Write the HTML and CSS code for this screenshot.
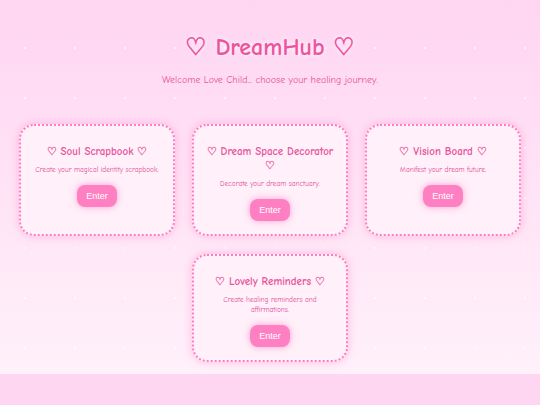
FILE: index.html
```html
<!DOCTYPE html>
<html lang="en">
<head>
<meta charset="utf-8">
<title>DreamHub</title>
<link rel="stylesheet" href="styles.css">
</head>
<body>
<div class="page">
  <header class="hero">
    <h1 class="hero-title">♡ DreamHub ♡</h1>
    <p class="hero-sub">Welcome Love Child... choose your healing journey.</p>
  </header>
  <main class="grid">
    <section class="card">
      <h2 class="card-title">♡ Soul Scrapbook ♡</h2>
      <p class="card-desc">Create your magical identity scrapbook.</p>
      <button class="btn">Enter</button>
    </section>
    <section class="card">
      <h2 class="card-title">♡ Dream Space Decorator ♡</h2>
      <p class="card-desc">Decorate your dream sanctuary.</p>
      <button class="btn">Enter</button>
    </section>
    <section class="card">
      <h2 class="card-title">♡ Vision Board ♡</h2>
      <p class="card-desc">Manifest your dream future.</p>
      <button class="btn">Enter</button>
    </section>
    <section class="card">
      <h2 class="card-title">♡ Lovely Reminders ♡</h2>
      <p class="card-desc">Create healing reminders and affirmations.</p>
      <button class="btn">Enter</button>
    </section>
  </main>
</div>
</body>
</html>
```

FILE: styles.css
```css
html {
  background: #ffd6f2;
}
body {
  margin: 0;
  font-family: "Comic Sans MS", "Comic Neue", cursive;
}
.page {
  background-image:
    radial-gradient(circle at center, rgba(255,255,255,0.6) 0, rgba(255,255,255,0.6) 0.8px, rgba(255,255,255,0) 1.5px),
    linear-gradient(180deg, #ffd5f2 0%, #fff1fa 100%);
  background-size: 50px 50px, 100% 100%;
  background-position: 0 23px, 0 0;
  padding: 32px 0 12px;
}
.hero {
  text-align: center;
}
.hero-title {
  margin: 0;
  font-size: 24px;
  line-height: 30px;
  font-weight: 700;
  color: #ec559e;
  text-shadow: 0 0 4px #ffffff;
}
.hero-sub {
  margin: 0;
  padding-top: 11px;
  font-size: 10px;
  line-height: 14px;
  color: #e8559c;
}
.grid {
  margin: 37px auto 0;
  width: 502px;
  display: flex;
  flex-wrap: wrap;
  justify-content: center;
  column-gap: 17px;
  row-gap: 18px;
}
.card {
  box-sizing: border-box;
  width: 156px;
  padding: 19px 10px 13px;
  background: #fff0fa;
  border: 2px dotted #ff7cc0;
  border-radius: 15px;
  box-shadow: 0 0 8px rgba(255, 140, 200, 0.55);
  text-align: center;
}
.card-title {
  margin: 0 0 6px;
  font-size: 11px;
  line-height: 14px;
  font-weight: 700;
  color: #e8559c;
}
.card-desc {
  margin: 0 0 10px;
  font-size: 7.3px;
  line-height: 10px;
  color: #e0509a;
}
.btn {
  font-family: "Liberation Sans", Arial, sans-serif;
  font-size: 9px;
  color: #ffffff;
  background: #ff80c2;
  border: 0;
  border-radius: 8px;
  width: 40px;
  height: 22px;
  padding: 0;
  box-shadow: 0 0 7px rgba(255, 110, 180, 0.6);
}
```
